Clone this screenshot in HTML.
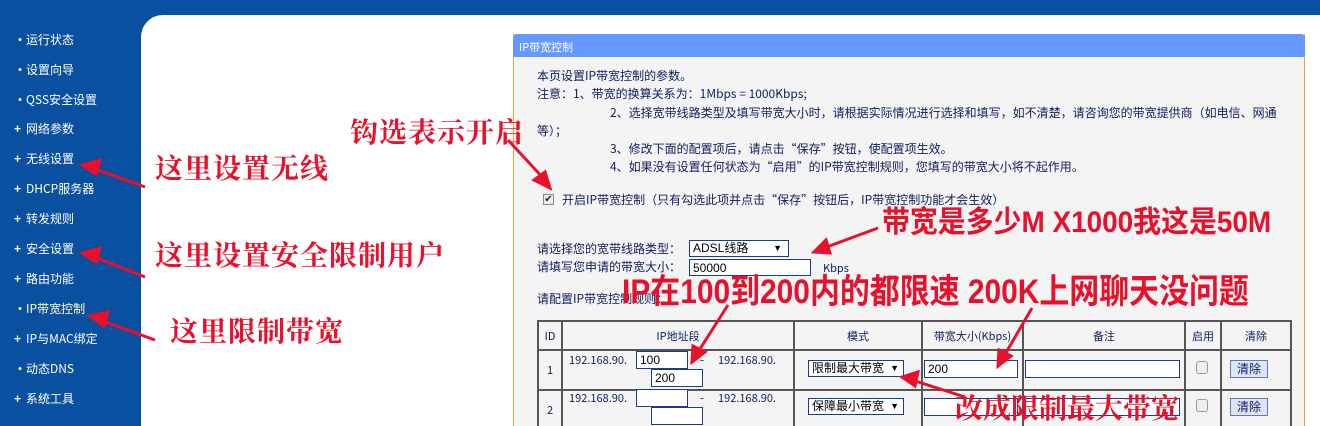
<!DOCTYPE html>
<html><head><meta charset="utf-8"><style>
*{margin:0;padding:0;box-sizing:border-box}
html,body{width:1320px;height:426px;overflow:hidden}
body{background:#0a50a0;position:relative;font-family:"Liberation Sans","Noto Sans CJK SC",sans-serif}
.a{position:absolute;white-space:nowrap}
#main{position:absolute;left:141px;top:15px;width:1179px;height:411px;background:#fff;border-top-left-radius:22px}
.nav{position:absolute;left:14px;color:#fff;font-size:12px;font-family:"Noto Sans CJK SC",sans-serif;line-height:14px}
.nav b{display:inline-block;width:12px;color:#ffffaa;font-weight:bold;text-align:left}
#panel{position:absolute;left:513px;top:34px;width:792px;height:392px;background:#f4f4f4;border-left:1px solid #f0a040;border-right:1px solid #f0a040}
#ph{position:absolute;left:513px;top:34px;width:792px;height:23px;background:#6699ff;border-top-left-radius:4px;border-top-right-radius:4px;color:#fff;font-size:11px;font-family:"Noto Sans CJK SC",sans-serif;padding:5px 6px}
.t{position:absolute;font-size:12px;color:#102060;font-family:"Noto Sans CJK SC",sans-serif;white-space:nowrap;line-height:14px}
.r{position:absolute;color:#e8102a;font-family:"Noto Serif CJK SC","Noto Sans CJK SC",serif;font-weight:bold;white-space:nowrap;line-height:1}
.rb{position:absolute;color:#e8102a;font-family:"Liberation Sans","Noto Sans CJK SC",sans-serif;font-weight:bold;white-space:nowrap;line-height:1;transform-origin:left}
table{position:absolute;left:537px;top:320px;border-collapse:separate;border-spacing:2px;background:#555;font-size:11px;color:#102060;font-family:"Noto Sans CJK SC",sans-serif}
td{background:#f4f4f4;text-align:center;vertical-align:middle;padding:0}
.inp{position:absolute;background:#fff;border:1px solid #1a3c8a;font-size:12px;color:#000;padding-left:3px;line-height:16px}
.sel{position:absolute;background:#fff;border:1px solid #1a3c8a;font-size:12px;color:#000;padding-left:3px;line-height:15px}
</style></head><body>
<div id="main"></div>
<div class="nav" style="top:33px"><b>•</b>运行状态</div>
<div class="nav" style="top:63px"><b>•</b>设置向导</div>
<div class="nav" style="top:93px"><b>•</b>QSS安全设置</div>
<div class="nav" style="top:122px"><b>+</b>网络参数</div>
<div class="nav" style="top:152px"><b>+</b>无线设置</div>
<div class="nav" style="top:182px"><b>+</b>DHCP服务器</div>
<div class="nav" style="top:212px"><b>+</b>转发规则</div>
<div class="nav" style="top:242px"><b>+</b>安全设置</div>
<div class="nav" style="top:272px"><b>+</b>路由功能</div>
<div class="nav" style="top:302px"><b>•</b><span style="color:#ffffcc">IP带宽控制</span></div>
<div class="nav" style="top:332px"><b>+</b>IP与MAC绑定</div>
<div class="nav" style="top:362px"><b>•</b>动态DNS</div>
<div class="nav" style="top:392px"><b>+</b>系统工具</div>

<div id="panel"></div>
<div id="ph">IP带宽控制</div>
<div class="t" style="left:537px;top:69px">本页设置IP带宽控制的参数。</div>
<div class="t" style="left:537px;top:87px">注意：1、带宽的换算关系为：1Mbps = 1000Kbps;</div>
<div class="t" style="left:610px;top:106px">2、选择宽带线路类型及填写带宽大小时，请根据实际情况进行选择和填写，如不清楚，请咨询您的带宽提供商（如电信、网通</div>
<div class="t" style="left:537px;top:124px">等）；</div>
<div class="t" style="left:610px;top:142px">3、修改下面的配置项后，请点击“保存”按钮，使配置项生效。</div>
<div class="t" style="left:610px;top:160px">4、如果没有设置任何状态为“启用”的IP带宽控制规则，您填写的带宽大小将不起作用。</div>
<div class="a" style="left:543px;top:194px;width:11px;height:11px;border:1px solid #888;background:#eee;font-size:10px;line-height:9px;text-align:center;color:#222">✔</div>
<div class="t" style="left:562px;top:193px">开启IP带宽控制（只有勾选此项并点击“保存”按钮后，IP带宽控制功能才会生效）</div>
<div class="t" style="left:537px;top:242px">请选择您的宽带线路类型：</div>
<div class="sel" style="left:689px;top:240px;width:100px;height:17px">ADSL线路<span style="position:absolute;right:6px;font-size:9px">▼</span></div>
<div class="t" style="left:537px;top:260px">请填写您申请的带宽大小：</div>
<div class="inp" style="left:689px;top:259px;width:122px;height:17px">50000</div>
<div class="t" style="left:823px;top:261px;font-size:11px">Kbps</div>
<div class="t" style="left:537px;top:292px">请配置IP带宽控制规则：</div>

<table>
<tr style="height:27px"><td style="width:22px">ID</td><td style="width:230px">IP地址段</td><td style="width:126px">模式</td><td style="width:99px">带宽大小(Kbps)</td><td style="width:160px">备注</td><td style="width:34px">启用</td><td style="width:68px">清除</td></tr>
<tr style="height:38px"><td>1</td><td></td><td></td><td></td><td></td><td></td><td></td></tr>
<tr style="height:38px"><td>2</td><td></td><td></td><td></td><td></td><td></td><td></td></tr>
</table>
<div class="t" style="left:569px;top:353px;font-size:11px">192.168.90.</div>
<div class="inp" style="left:636px;top:351px;width:52px;height:18px">100</div>
<div class="t" style="left:700px;top:353px">-</div>
<div class="t" style="left:718px;top:353px;font-size:11px">192.168.90.</div>
<div class="inp" style="left:651px;top:369px;width:52px;height:18px">200</div>
<div class="sel" style="left:808px;top:360px;width:96px;height:17px">限制最大带宽<span style="position:absolute;right:4px;font-size:9px">▼</span></div>
<div class="inp" style="left:924px;top:360px;width:94px;height:18px">200</div>
<div class="inp" style="left:1025px;top:360px;width:155px;height:18px"></div>
<div class="a" style="left:1196px;top:361px;width:12px;height:13px;border:1px solid #999;border-radius:3px;background:#eee"></div>
<div class="a" style="left:1230px;top:360px;width:38px;height:18px;border:1px solid #6677aa;background:#dde4ff;font-size:12px;text-align:center;line-height:16px;color:#102060;font-family:'Noto Sans CJK SC',sans-serif">清除</div>

<div class="t" style="left:569px;top:391px;font-size:11px">192.168.90.</div>
<div class="inp" style="left:636px;top:389px;width:52px;height:18px"></div>
<div class="t" style="left:700px;top:391px">-</div>
<div class="t" style="left:718px;top:391px;font-size:11px">192.168.90.</div>
<div class="inp" style="left:651px;top:407px;width:52px;height:18px"></div>
<div class="sel" style="left:808px;top:398px;width:96px;height:17px">保障最小带宽<span style="position:absolute;right:4px;font-size:9px">▼</span></div>
<div class="inp" style="left:924px;top:398px;width:94px;height:18px"></div>
<div class="inp" style="left:1025px;top:398px;width:155px;height:18px"></div>
<div class="a" style="left:1196px;top:399px;width:12px;height:13px;border:1px solid #999;border-radius:3px;background:#eee"></div>
<div class="a" style="left:1230px;top:398px;width:38px;height:18px;border:1px solid #6677aa;background:#dde4ff;font-size:12px;text-align:center;line-height:16px;color:#102060;font-family:'Noto Sans CJK SC',sans-serif">清除</div>

<div class="r" style="left:155px;top:153px;font-size:28px;letter-spacing:1px">这里设置无线</div>
<div class="r" style="left:155px;top:240px;font-size:28px;letter-spacing:1px">这里设置安全限制用户</div>
<div class="r" style="left:170px;top:316px;font-size:28px;letter-spacing:1px">这里限制带宽</div>
<div class="r" style="left:350px;top:117px;font-size:28px;letter-spacing:1px">钩选表示开启</div>
<div class="rb" style="left:882px;top:208px;font-size:30px;transform:scaleX(0.93)">带宽是多少M X1000我这是50M</div>
<div class="rb" style="left:622px;top:275px;font-size:34px;transform:scaleX(0.88)">IP在100到200内的都限速 200K上网聊天没问题</div>
<div class="r" style="left:955px;top:393px;font-size:28px">改成限制最大带宽</div>

<svg class="a" style="left:0;top:0" width="1320" height="426">
<g stroke="#e8102a" stroke-width="3" fill="#e8102a">
<line x1="145" y1="187" x2="92" y2="168"/><polygon points="82,165 100,160 96,174"/>
<line x1="145" y1="277" x2="92" y2="256"/><polygon points="82,253 100,248 96,262"/>
<line x1="155" y1="340" x2="100" y2="320"/><polygon points="90,316 108,312 104,326"/>
<line x1="508" y1="140" x2="545" y2="180"/><polygon points="550,188 534,180 545,172"/>
<line x1="878" y1="228" x2="824" y2="248"/><polygon points="814,252 826,240 830,253"/>
<line x1="728" y1="305" x2="698" y2="352"/><polygon points="692,362 693,346 705,352"/>
<line x1="1032" y1="308" x2="1004" y2="356"/><polygon points="998,366 999,350 1011,356"/>
<line x1="965" y1="397" x2="912" y2="380"/><polygon points="902,377 918,372 915,386"/>
</g></svg>
</body></html>
